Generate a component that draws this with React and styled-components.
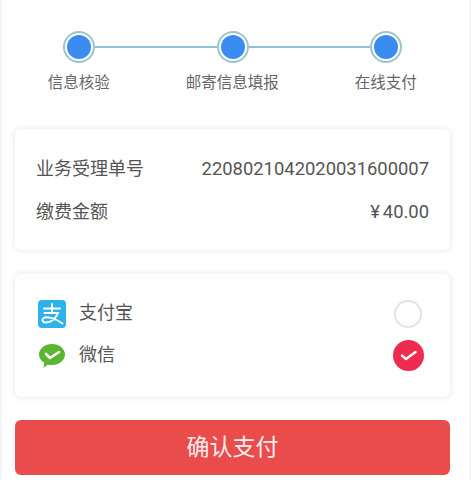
import React from 'react';
import styled, { createGlobalStyle } from 'styled-components';

const GlobalStyle = createGlobalStyle`
  html, body {
    margin: 0;
    padding: 0;
    background: #fff;
  }
  body {
    font-family: "Noto Sans CJK SC", Roboto, sans-serif;
    overflow: hidden;
  }
`;

const Page = styled.div`
  width: 471px;
  height: 480px;
  box-sizing: border-box;
  padding: 0 19px 5px 13px;
  display: flex;
  flex-direction: column;
  background: #fff;
  border-left: 2px solid #f4f5f5;
  border-right: 2px solid #f4f5f5;
`;

const Steps = styled.div`
  height: 129px;
  flex: none;
  padding-top: 31px;
  box-sizing: border-box;
`;

const Track = styled.div`
  display: flex;
  align-items: center;
  padding: 0 48px 0 48px;
`;

const Dot = styled.div`
  width: 32px;
  height: 32px;
  flex: none;
  box-sizing: border-box;
  border: 2px solid #9cc3cf;
  border-radius: 50%;
  padding: 2px;
  background: #fff;
  &::before {
    content: '';
    display: block;
    width: 24px;
    height: 24px;
    border-radius: 50%;
    background: #3b8cf0;
  }
`;

const Line = styled.div`
  flex: 1;
  height: 2px;
  background: #8fc0d6;
`;

const Labels = styled.div`
  display: grid;
  grid-template-columns: repeat(3, 153.5px);
  margin: 7px 0 0 -13px;
`;

const Label = styled.div`
  font-size: 15.5px;
  line-height: 22px;
  color: #666;
  text-align: center;
`;

const Card = styled.div`
  background: #fff;
  border-radius: 6px;
  box-shadow: 0 0 7px rgba(0, 0, 0, 0.11);
`;

const InfoCard = styled(Card)`
  height: 121px;
  flex: none;
  box-sizing: border-box;
  padding: 24px 21px 0;
  display: flex;
  flex-direction: column;
  gap: 13px;
`;

const InfoRow = styled.div`
  display: flex;
  justify-content: space-between;
  align-items: center;
  height: 30px;
`;

const InfoName = styled.span`
  font-size: 18px;
  line-height: 30px;
  margin-bottom: 2px;
  color: #555;
`;

const InfoValue = styled.span`
  font-family: Roboto, sans-serif;
  font-size: 18.4px;
  line-height: 30px;
  margin-top: 2px;
  color: #555;
`;

const Yen = styled.span`
  margin-right: 3px;
`;

const PayCard = styled(Card)`
  margin-top: 24px;
  height: 123px;
  flex: none;
  box-sizing: border-box;
  padding: 24px 26px 0 23px;
  display: flex;
  flex-direction: column;
  gap: 11px;
`;

const PayRow = styled.div`
  display: flex;
  align-items: center;
  height: 31px;
`;

const PayIcon = styled.svg`
  width: 28px;
  height: 28px;
  flex: none;
`;

const PayName = styled.span`
  flex: 1;
  margin: 0 0 5px 13px;
  font-size: 18px;
  line-height: 26px;
  color: #555;
`;

const Radio = styled.div`
  width: 28px;
  height: 28px;
  margin-right: 2px;
  box-sizing: border-box;
  border: 2px solid #e4e4e4;
  border-radius: 50%;
`;

const CheckedRadio = styled.svg`
  width: 31px;
  height: 31px;
`;

const ConfirmButton = styled.button`
  margin-top: 23px;
  height: 55px;
  flex: none;
  border: none;
  border-radius: 6px;
  padding: 0 0 5px;
  background: #e94c4a;
  color: #fdeeee;
  font-family: inherit;
  font-size: 23px;
`;

const AlipayIcon = () => (
  <PayIcon viewBox="0 0 28 28">
    <rect width="28" height="28" rx="4" fill="#2fb2ec" />
    <path
      d="M6 8.500h16M14 4v9M6.500 13H20c-2 5-6 9-11.500 9.500-3.500.3-5-2-3.500-4 2-2.500 10-1.500 19.500 5"
      fill="none"
      stroke="#fff"
      strokeWidth="2"
      strokeLinecap="round"
    />
  </PayIcon>
);

const WechatIcon = () => (
  <PayIcon viewBox="0 0 28 28">
    <path
      d="M14 2c7.200 0 13 4.700 13 10.500S21.200 23 14 23c-1.500 0-3-.2-4.300-.6L5.500 26l.8-5.200C3 18.800 1 15.900 1 12.500 1 6.700 6.800 2 14 2z"
      fill="#5bb530"
    />
    <path d="M8 12l4 4 9-6" fill="none" stroke="#fff" strokeWidth="2.600" strokeLinecap="round" strokeLinejoin="round" />
  </PayIcon>
);

const steps = ['信息核验', '邮寄信息填报', '在线支付'];

const App = () => {
  return (
    <>
      <GlobalStyle />
      <Page>
        <Steps>
          <Track>
            <Dot />
            <Line />
            <Dot />
            <Line />
            <Dot />
          </Track>
          <Labels>
            {steps.map((s) => (
              <Label key={s}>{s}</Label>
            ))}
          </Labels>
        </Steps>
        <InfoCard>
          <InfoRow>
            <InfoName>业务受理单号</InfoName>
            <InfoValue>2208021042020031600007</InfoValue>
          </InfoRow>
          <InfoRow>
            <InfoName>缴费金额</InfoName>
            <InfoValue><Yen>¥</Yen>40.00</InfoValue>
          </InfoRow>
        </InfoCard>
        <PayCard>
          <PayRow>
            <AlipayIcon />
            <PayName>支付宝</PayName>
            <Radio />
          </PayRow>
          <PayRow>
            <WechatIcon />
            <PayName>微信</PayName>
            <CheckedRadio viewBox="0 0 31 31">
              <circle cx="15.500" cy="15.500" r="15.500" fill="#ee2c52" />
              <path d="M9 15.500l4 3.500 9.500-7" fill="none" stroke="#fff" strokeWidth="2.400" strokeLinecap="round" strokeLinejoin="round" />
            </CheckedRadio>
          </PayRow>
        </PayCard>
        <ConfirmButton>确认支付</ConfirmButton>
      </Page>
    </>
  );
};

export default App;
